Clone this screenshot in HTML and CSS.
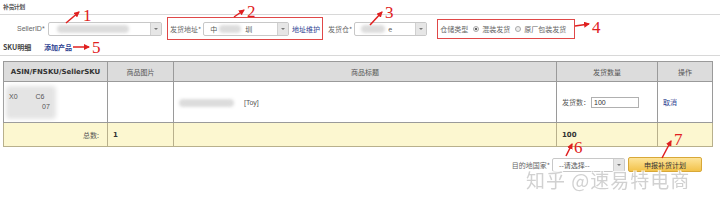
FILE: index.html
```html
<!DOCTYPE html>
<html lang="zh">
<head>
<meta charset="utf-8">
<link rel="stylesheet" href="styles.css">
</head>
<body>
<div class="page">
  <div class="title">补货计划</div>
  <div class="form-row">
    <span class="lbl lbl-seller">SellerID*</span>
    <div class="sel sel-seller"><span class="blob blob-seller"></span><span class="arrow"></span></div>
    <div class="redbox box-addr">
      <span class="lbl">发货地址*</span>
      <div class="sel sel-addr"><span class="val">中</span><span class="blob blob-addr"></span><span class="val">圳</span><span class="arrow"></span></div>
      <a class="link">地址维护</a>
    </div>
    <span class="lbl lbl-wh">发货仓*</span>
    <div class="sel sel-wh"><span class="blob blob-wh"></span><span class="val">e</span><span class="arrow"></span></div>
    <div class="redbox box-type">
      <span class="lbl">仓储类型</span>
      <span class="radio checked"></span><span class="lbl">混装发货</span>
      <span class="radio"></span><span class="lbl">原厂包装发货</span>
    </div>
  </div>
  <div class="sku-row">
    <span class="sku-lbl">SKU明细</span>
    <a class="link add">添加产品</a>
  </div>
  <table class="grid">
    <colgroup>
      <col class="c1"><col class="c2"><col class="c3"><col class="c4"><col class="c5">
    </colgroup>
    <thead>
      <tr><th class="bold">ASIN/FNSKU/SellerSKU</th><th>商品图片</th><th>商品标题</th><th>发货数量</th><th>操作</th></tr>
    </thead>
    <tbody>
      <tr class="item">
        <td class="sku-cell"><span class="blob blob-sku"></span><span class="sku-a">X0</span><span class="sku-b">C6</span><br><span class="sku-c">07</span></td>
        <td></td>
        <td class="title-cell"><span class="blob blob-title"></span><span class="toy">[Toy]</span></td>
        <td><span class="qty-lbl">发货数：</span><span class="qty-input">100</span></td>
        <td><a class="link">取消</a></td>
      </tr>
      <tr class="total">
        <td class="right">总数:</td>
        <td class="bold">1</td>
        <td></td>
        <td class="bold">100</td>
        <td></td>
      </tr>
    </tbody>
  </table>
  <div class="bottom-row">
    <span class="lbl">目的地国家*</span>
    <div class="sel sel-country"><span class="val">--请选择--</span><span class="arrow"></span></div>
    <button class="btn">申报补货计划</button>
  </div>
</div>

<div class="watermark">知乎 @速易特电商</div>

<svg class="anno" width="720" height="208" viewBox="0 0 720 208">
  <defs>
    <marker id="h" markerWidth="6" markerHeight="6" refX="5" refY="3" orient="auto" markerUnits="userSpaceOnUse">
      <path d="M0,0 L6,3 L0,6 Z" fill="#e02020"/>
    </marker>
  </defs>
  <g stroke="#e02020" stroke-width="1.5" fill="none" marker-end="url(#h)">
    <line x1="66" y1="23" x2="79" y2="12"/>
    <line x1="234" y1="17" x2="244" y2="10"/>
    <line x1="370" y1="25" x2="382" y2="12"/>
    <line x1="575" y1="26" x2="589" y2="24"/>
    <line x1="73" y1="47" x2="89" y2="47"/>
    <line x1="566" y1="156" x2="572" y2="144"/>
    <line x1="662" y1="158" x2="671" y2="141"/>
  </g>
  <g class="num" fill="#e02020">
    <text x="83" y="21">1</text>
    <text x="247" y="17">2</text>
    <text x="385" y="18">3</text>
    <text x="592" y="33">4</text>
    <text x="92" y="53">5</text>
    <text x="574" y="153">6</text>
    <text x="674" y="145">7</text>
  </g>
</svg>
</body>
</html>
```

FILE: styles.css
```css
html, body {
  margin: 0;
  padding: 0;
  background: #fff;
}
body {
  width: 720px;
  height: 208px;
  overflow: hidden;
  position: relative;
  font-family: "Noto Sans CJK SC", "Noto Sans", sans-serif;
  font-size: 7px;
  color: #555;
}
.page {
  display: flex;
  flex-direction: column;
}
.title {
  height: 14px;
  line-height: 13px;
  padding-left: 3px;
  font-size: 6px;
  letter-spacing: -0.6px;
  font-weight: bold;
  color: #555;
  border-bottom: 1px solid #d8d8d8;
}
.form-row {
  display: flex;
  align-items: center;
  height: 27px;
}
.lbl {
  white-space: nowrap;
  color: #666;
  line-height: 10px;
}
.lbl-seller {
  margin-left: 17px;
  width: 31px;
  font-family: "Liberation Sans", sans-serif;
  font-size: 7px;
}
.sel {
  position: relative;
  display: flex;
  align-items: center;
  height: 14px;
  box-sizing: border-box;
  border: 1px solid #c8c8c8;
  border-radius: 2px;
  background: #fff;
  padding-left: 6px;
  color: #555;
}
.sel .arrow {
  position: absolute;
  right: 0;
  top: 0;
  bottom: 0;
  width: 10px;
  background: #e6e6e6;
  border-left: 1px solid #d0d0d0;
}
.sel .arrow::after {
  content: "";
  position: absolute;
  left: 3px;
  top: 5px;
  border-left: 2px solid transparent;
  border-right: 2px solid transparent;
  border-top: 2px solid #777;
}
.sel-seller { width: 114px; }
.sel-addr { width: 90px; margin-left: 2px; }
.sel-wh { width: 73px; margin-left: 2px; }
.sel-country { width: 73px; margin-left: 2px; }
.val { line-height: 10px; }
.blob {
  display: inline-block;
  background: #dcdcdc;
  border-radius: 4px;
  filter: blur(1.5px);
}
.blob-seller { width: 72px; height: 8px; margin-left: 2px; }
.blob-addr { width: 22px; height: 8px; margin: 0 4px 0 2px; }
.blob-wh { width: 24px; height: 8px; margin-right: 3px; }
.redbox {
  display: flex;
  align-items: center;
  height: 23px;
  box-sizing: border-box;
  border: 1.5px solid #e04848;
  padding: 0 2px;
}
.box-addr {
  width: 156px;
  margin-left: 5px;
}
.link {
  color: #2c3e90;
  text-decoration: none;
  line-height: 10px;
  white-space: nowrap;
}
.box-addr .link { margin-left: 3px; }
.lbl-wh { margin-left: 5px; }
.box-type {
  width: 138px;
  height: 20px;
  margin-left: 10px;
}
.radio {
  width: 6px;
  height: 6px;
  box-sizing: border-box;
  border-radius: 50%;
  border: 1px solid #aaa;
  background: #eee;
  margin: 0 3px 0 5px;
  position: relative;
}
.radio.checked::after {
  content: "";
  position: absolute;
  left: 1px;
  top: 1px;
  width: 2px;
  height: 2px;
  border-radius: 50%;
  background: #333;
}
.sku-row {
  display: flex;
  align-items: flex-start;
  height: 13px;
  padding-left: 3px;
  border-bottom: 1px solid #d8d8d8;
  line-height: 10px;
}
.sku-lbl {
  font-weight: bold;
  color: #444;
  width: 41px;
}
.add { font-weight: bold; }
.grid {
  margin: 5px 0 0 3px;
  width: 709px;
  border-collapse: collapse;
  table-layout: fixed;
  line-height: 10px;
}
.c1 { width: 104px; }
.c2 { width: 66px; }
.c3 { width: 383px; }
.c4 { width: 101px; }
.c5 { width: 55px; }
.grid th {
  height: 19px;
  background: #dcdcdc;
  border: 1px solid #9a9a9a;
  font-weight: normal;
  color: #555;
  padding: 0;
}
.grid th.bold {
  font-weight: bold;
  color: #333;
  font-family: "DejaVu Sans", sans-serif;
  font-size: 7px;
}
.grid td {
  border: 1px solid #9a9a9a;
  padding: 0 0 0 5px;
  color: #555;
}
.item td { height: 40px; }
.sku-cell {
  position: relative;
  font-family: "Liberation Sans", sans-serif;
  font-size: 7px;
  color: #666;
  line-height: 10px;
}
.sku-cell .blob-sku {
  position: absolute;
  left: 2px;
  top: 4px;
  width: 50px;
  height: 33px;
  background: #e4e4e4;
  filter: blur(2px);
}
.sku-a { position: relative; }
.sku-b { position: relative; margin-left: 18px; }
.sku-c { position: relative; margin-left: 33px; }
.title-cell .blob-title {
  width: 55px;
  height: 8px;
  margin-right: 10px;
  vertical-align: middle;
}
.toy {
  font-family: "Liberation Sans", sans-serif;
  font-size: 7px;
}
.qty-input {
  display: inline-block;
  width: 48px;
  height: 11px;
  box-sizing: border-box;
  border: 1px solid #b0b0b0;
  line-height: 9px;
  padding-left: 2px;
  vertical-align: middle;
  font-family: "Liberation Sans", sans-serif;
  color: #333;
  margin-left: 1px;
}
.qty-lbl { vertical-align: middle; }
.total td {
  height: 23px;
  background: #fcf7d0;
  border-color: #b8b08c;
}
.total td.bold {
  font-weight: bold;
  color: #333;
  font-family: "DejaVu Sans", sans-serif;
  font-size: 7px;
}
.total td.right {
  text-align: right;
  padding-right: 8px;
}
.bottom-row {
  display: flex;
  justify-content: flex-end;
  align-items: center;
  height: 15px;
  margin-top: 10px;
  padding-right: 18px;
}
.btn {
  margin-left: 3px;
  width: 74px;
  height: 15px;
  padding: 0;
  border: 1px solid #d8a838;
  border-radius: 2px;
  background: linear-gradient(#fde49a, #f2c24a);
  color: #333;
  font-family: "Noto Sans CJK SC", sans-serif;
  font-size: 7px;
  line-height: 12px;
}
.watermark {
  position: absolute;
  left: 526px;
  top: 170px;
  font-family: "Noto Sans CJK SC", sans-serif;
  font-size: 19px;
  line-height: 19px;
  letter-spacing: 1px;
  color: #cdcdcd;
  text-shadow: 1px 1px 0 #fff, -1px -1px 0 #fff, 1px -1px 0 #fff, -1px 1px 0 #fff;
  white-space: nowrap;
  opacity: 0.9;
}
.anno {
  position: absolute;
  left: 0;
  top: 0;
  pointer-events: none;
}
.num text {
  font-family: "Liberation Serif", serif;
  font-size: 17px;
}
```
